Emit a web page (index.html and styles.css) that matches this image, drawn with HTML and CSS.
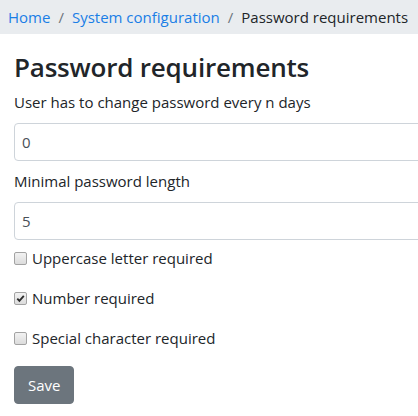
FILE: index.html
```html
<!DOCTYPE html>
<html lang="en">
<head>
<meta charset="utf-8">
<title>Password requirements</title>
<link rel="stylesheet" href="styles.css">
</head>
<body>
<nav class="breadcrumb">
  <a href="#">Home</a><span class="sep">/</span><a href="#">System configuration</a><span class="sep">/</span><span class="current">Password requirements</span>
</nav>
<main class="content">
  <h1 class="title">Password requirements</h1>
  <form class="form">
    <div class="field">
      <label class="label" for="days">User has to change password every n days</label>
      <input class="input" id="days" type="text" value="0">
    </div>
    <div class="field field-last">
      <label class="label" for="len">Minimal password length</label>
      <input class="input" id="len" type="text" value="5">
    </div>
    <label class="check"><input class="native" type="checkbox"><span class="box"></span><span>Uppercase letter required</span></label>
    <label class="check"><input class="native" type="checkbox" checked><span class="box"><svg viewBox="0 0 12 12" width="11" height="11"><path d="M2.5 6.2 L4.8 8.6 L9.6 3.2" fill="none" stroke="#2b2b2b" stroke-width="2"/></svg></span><span>Number required</span></label>
    <label class="check"><input class="native" type="checkbox"><span class="box"></span><span>Special character required</span></label>
    <button class="btn" type="button">Save</button>
  </form>
</main>
</body>
</html>
```
FILE: styles.css
```css
html, body {
  margin: 0;
  padding: 0;
  overflow: hidden;
  background: #fff;
}
body {
  font-family: "Open Sans", "Noto Sans", sans-serif;
  font-size: 15px;
  line-height: 24px;
  color: #212529;
}
.breadcrumb {
  display: flex;
  align-items: center;
  height: 34px;
  padding: 0 8px;
  background: #e9ecef;
  white-space: nowrap;
}
.breadcrumb a {
  color: #1a7ee6;
  text-decoration: none;
}
.breadcrumb .sep {
  color: #6c757d;
  padding: 0 8px;
}
.content {
  padding: 0 14px;
}
.title {
  margin: 17px 0 7px;
  font-size: 26px;
  line-height: 32px;
  font-weight: 600;
  letter-spacing: -0.2px;
}
.form {
  display: flex;
  flex-direction: column;
  align-items: flex-start;
}
.field {
  display: flex;
  flex-direction: column;
  width: 440px;
  margin-bottom: 8px;
}
.field-last {
  margin-bottom: 6px;
}
.label {
  margin-bottom: 9px;
}
.input {
  box-sizing: border-box;
  height: 38px;
  padding: 6px 7px;
  border: 1px solid #ced4da;
  border-radius: 4px;
  font: inherit;
  color: #495057;
}
.check {
  display: flex;
  align-items: center;
  height: 24px;
  margin-bottom: 16px;
}
.native {
  position: absolute;
  opacity: 0;
  width: 0;
  height: 0;
  margin: 0;
}
.box {
  box-sizing: border-box;
  display: flex;
  align-items: center;
  justify-content: center;
  width: 13px;
  height: 13px;
  margin: 0 5px 0 0;
  border: 1px solid #a3a3a3;
  border-radius: 2px;
  background: linear-gradient(#f2f2f2, #dcdcdc);
}
.btn {
  height: 38px;
  padding: 0 13px;
  border: 1px solid #6c757d;
  border-radius: 4px;
  background: #6c757d;
  color: #fff;
  font: inherit;
}
```
